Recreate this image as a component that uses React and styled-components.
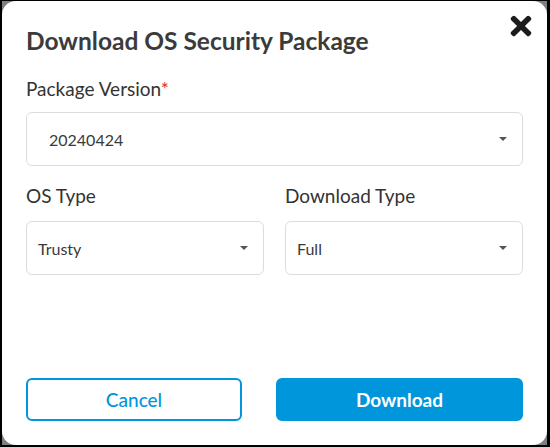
import React from 'react';
import styled, { createGlobalStyle } from 'styled-components';
import { FaTimes } from 'react-icons/fa';

const GlobalStyle = createGlobalStyle`
    html, body {
        margin:0;
        padding:0;
        background:#808080;
    }
    * {
        box-sizing:border-box;
    }
`;

const Frame = styled.div`
    width:550px;
    height:447px;
    border-left:2px solid #000;
    border-top:1px solid #000;
    border-right:3px solid #000;
    border-bottom:2px solid #000;
    background:#808080;
`;

const Modal = styled.div`
    height:100%;
    background:#fff;
    border-radius:14px;
    padding:24px;
    display:flex;
    flex-direction:column;
    font-family:Lato, "Open Sans", sans-serif;
    color:#333;
`;

const Header = styled.div`
    display:flex;
    justify-content:space-between;
    align-items:flex-start;
    height:30px;
`;

const Title = styled.h2`
    margin:2px 0 0 0;
    font-size:24.5px;
    font-weight:700;
    color:#3b3b3b;
    line-height:28px;
    white-space:nowrap;
`;

const Close = styled.button`
    border:none;
    background:none;
    padding:0;
    margin:-14px -13px 0 0;
    cursor:pointer;
    color:#1c1c1c;
    font-size:30px;
    display:flex;
`;

const Field = styled.div`
    display:flex;
    flex-direction:column;
    flex:1;
`;

const Label = styled.label`
    font-size:19px;
    line-height:23px;
    color:#333;
    margin-bottom:${({ gap }) => gap}px;
`;

const Required = styled.span`
    color:#e0302a;
`;

const Select = styled.div`
    height:54px;
    border:1px solid #dcdcdc;
    border-radius:6px;
    display:flex;
    align-items:center;
    justify-content:space-between;
    padding:0 15px 0 ${({ inset }) => inset}px;
    font-size:16px;
    color:#3a3a3a;
`;

const Caret = styled.span`
    width:0;
    height:0;
    border-left:4px solid transparent;
    border-right:4px solid transparent;
    border-top:4px solid #555;
`;

const Row = styled.div`
    display:flex;
    gap:21px;
    margin-top:${({ top }) => top}px;
`;

const Spacer = styled.div`
    flex:1;
`;

const Actions = styled.div`
    display:grid;
    grid-template-columns:216px 1fr;
    gap:34px;
`;

const Button = styled.button`
    height:43px;
    border-radius:6px;
    border:2px solid #0096db;
    background:${({ primary }) => (primary ? '#0096db' : '#fff')};
    color:${({ primary }) => (primary ? '#fff' : '#0096db')};
    font-family:Lato, "Open Sans", sans-serif;
    font-size:19px;
    font-weight:${({ primary }) => (primary ? 700 : 500)};
    cursor:pointer;
`;

const App = () => {
    return (
        <>
            <GlobalStyle />
            <Frame>
                <Modal>
                    <Header>
                        <Title>Download OS Security Package</Title>
                        <Close aria-label="close"><FaTimes /></Close>
                    </Header>
                    <Row top={22}>
                        <Field>
                            <Label gap={12}>Package Version<Required>*</Required></Label>
                            <Select inset={22}>
                                20240424
                                <Caret />
                            </Select>
                        </Field>
                    </Row>
                    <Row top={18}>
                        <Field>
                            <Label gap={14}>OS Type</Label>
                            <Select inset={11}>
                                Trusty
                                <Caret />
                            </Select>
                        </Field>
                        <Field>
                            <Label gap={14}>Download Type</Label>
                            <Select inset={11}>
                                Full
                                <Caret />
                            </Select>
                        </Field>
                    </Row>
                    <Spacer />
                    <Actions>
                        <Button>Cancel</Button>
                        <Button primary>Download</Button>
                    </Actions>
                </Modal>
            </Frame>
        </>
    );
};

export default App;
